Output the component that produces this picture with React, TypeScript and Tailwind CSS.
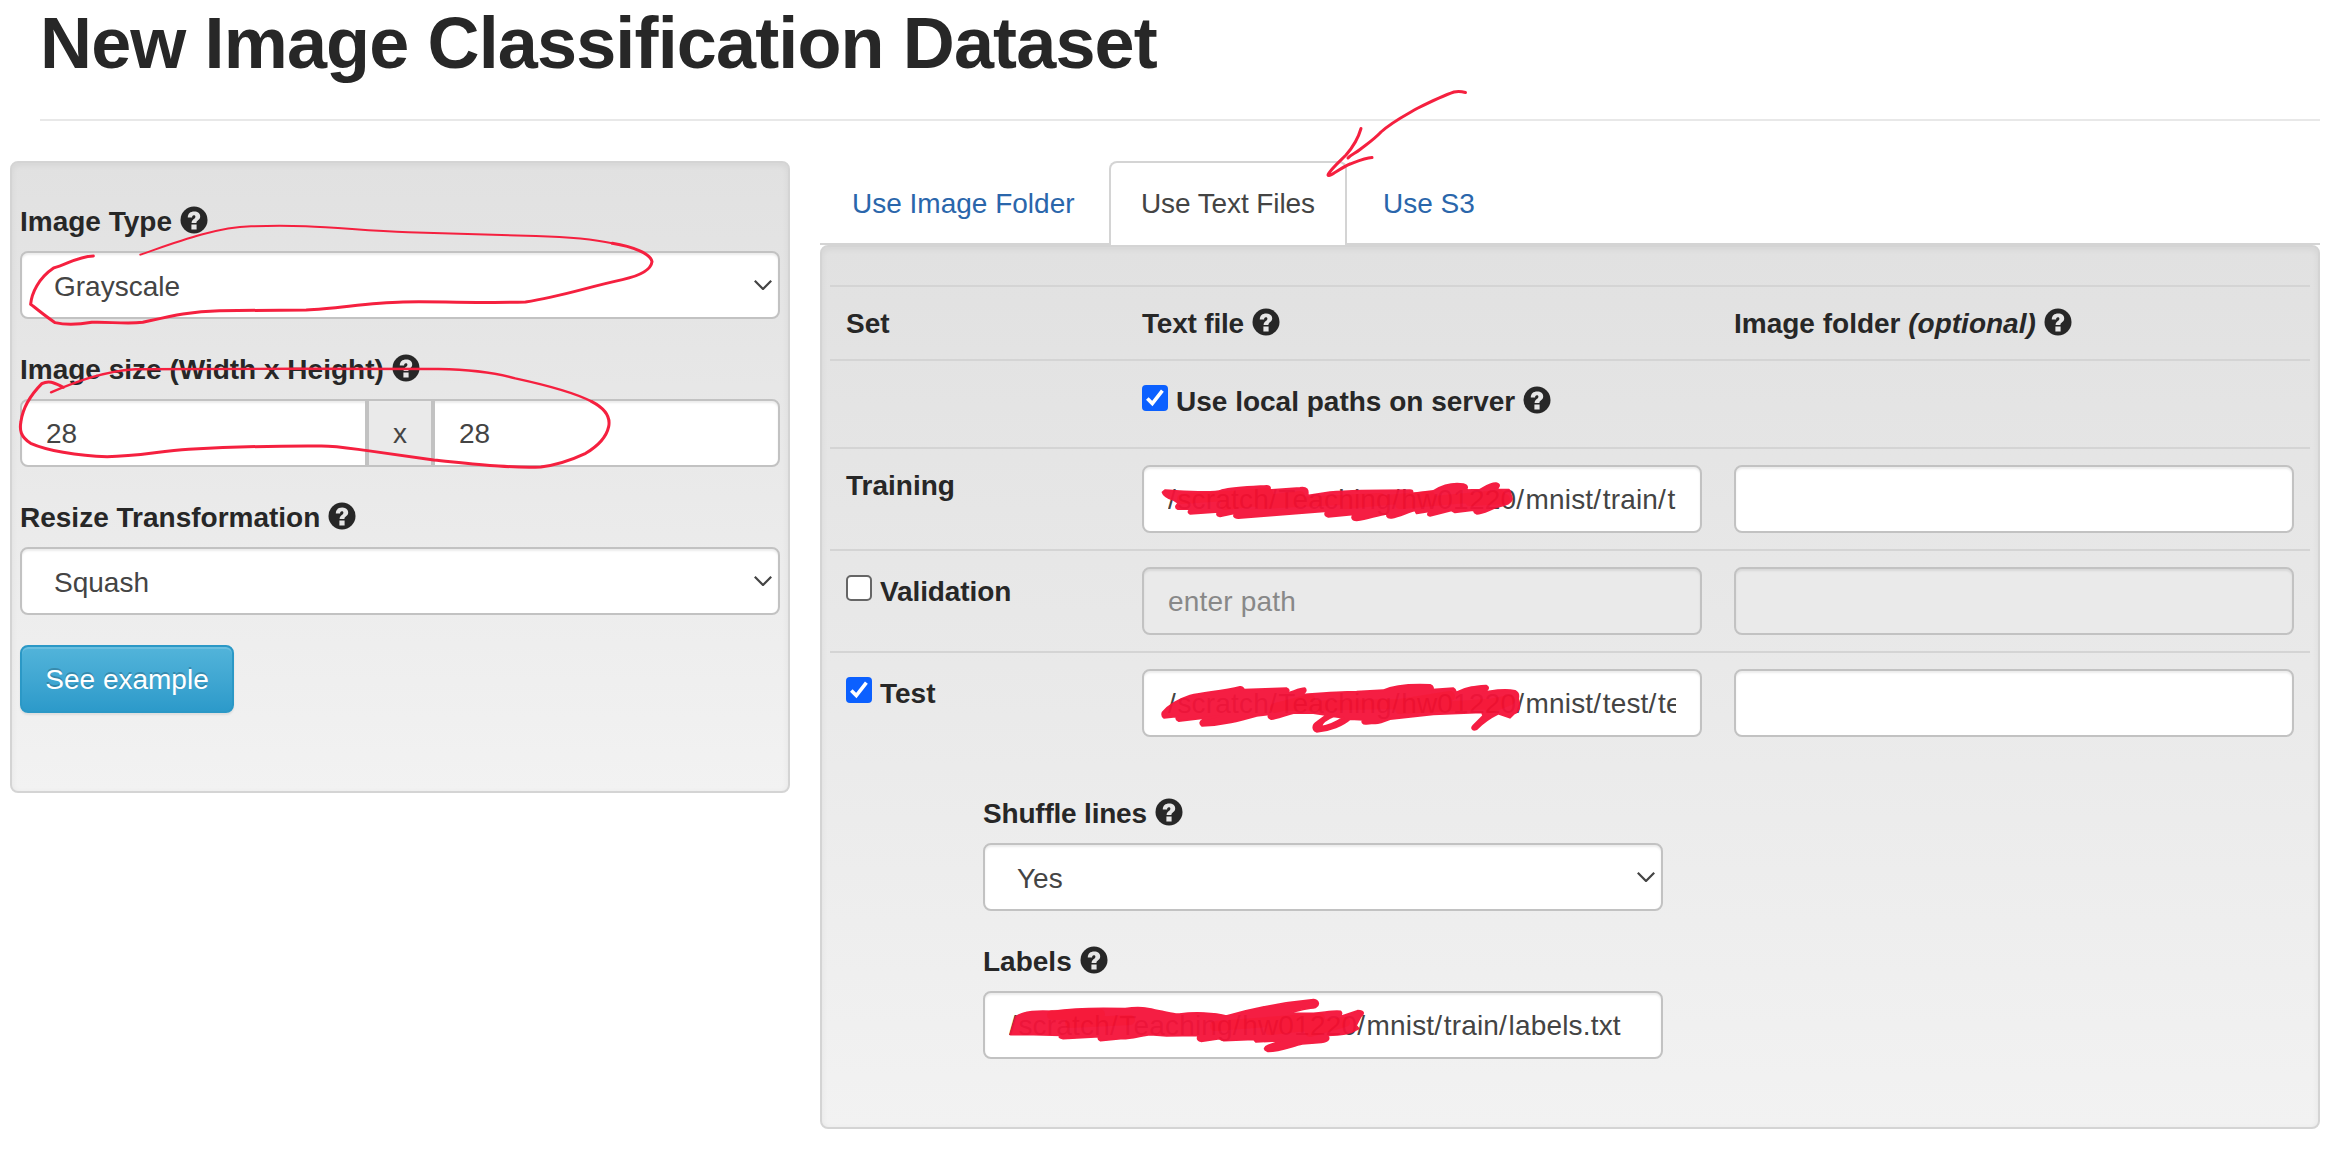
import React from "react";

const Q = () => (
  <svg viewBox="0 0 28 28" className="inline-block h-[28px] w-[28px] shrink-0 fill-[#272727]">
    <circle cx="14" cy="14" r="13.5" />
    <path d="M7.8 11.6 C7.8 7.6 10.4 5.6 14.2 5.6 C17.8 5.6 20.2 7.4 20.2 10.4 C20.2 14 16.400 14 16.400 17 H11.600 C11.600 13.200 15.400 13.200 15.400 10.800 C15.400 9.700 14.700 9.300 13.800 9.300 C12.600 9.300 12.100 10.200 12.100 11.600 Z M11.400 18.600 H16.600 V23.600 H11.400 Z" fill="#e6e6e6" />
  </svg>
);

const FIELD =
  "h-[68px] w-full rounded-[8px] border-2 border-[#c2c2c2] bg-white text-[28px] leading-[40px] text-[#444] shadow-[inset_0_2px_2px_rgba(0,0,0,0.075)] overflow-hidden whitespace-nowrap flex items-center";

function Label({ children, tight = false }: { children: React.ReactNode; tight?: boolean }) {
  return (
    <div className={"mb-[10px] flex h-[40px] items-center gap-[7px] pt-[2px] text-[28px] font-bold leading-[40px] " + (tight ? "tracking-[-0.2px]" : "")}>
      {children}
      <span className="relative -top-[2px] left-[1px] flex"><Q /></span>
    </div>
  );
}

function Select({ value }: { value: string }) {
  return (
    <div className={FIELD + " justify-between pl-[32px] pr-[6px]"}>
      <span className="pt-[3px]">{value}</span>
      <svg viewBox="0 0 18 10" className="h-[10px] w-[18px] fill-none stroke-[#444]" strokeWidth="2.2">
        <path d="M0.8 0.8 L9 9 L17.2 0.8" />
      </svg>
    </div>
  );
}

/* Paths get slightly wider spacing, with extra room after each slash */
function PathText({ value }: { value: string }) {
  return (
    <>
      {value.split(/(\/)/).map((part, i) =>
        part === "/" ? <span key={i} className="tracking-[1.6px]">/</span> : <span key={i} className="tracking-[0.18px]">{part}</span>
      )}
    </>
  );
}

function Field({ value = "", disabled = false }: { value?: string; disabled?: boolean }) {
  return (
    <div className={FIELD + " px-[24px] " + (disabled ? "bg-[#eaeaea]! text-[#888]!" : "")}>
      <span className="block w-full overflow-hidden pt-[2px]"><PathText value={value} /></span>
    </div>
  );
}

function Check({ on }: { on: boolean }) {
  return on ? (
    <svg viewBox="0 0 26 26" className="h-[26px] w-[26px] shrink-0">
      <rect width="26" height="26" rx="4" fill="#0b60ff" />
      <path d="M5.3 13.600 L10.300 18.600 L20.400 5.600" fill="none" stroke="#fff" strokeWidth="3.6" />
    </svg>
  ) : (
    <span className="h-[26px] w-[26px] shrink-0 rounded-[5px] border-2 border-[#666] bg-white" />
  );
}

const WELL =
  "rounded-[8px] border-2 border-[#d4d4d4] bg-linear-to-b from-[#e1e1e1] to-[#f2f2f2] shadow-[inset_0_2px_6px_rgba(0,0,0,0.06)]";
const ROW = "grid grid-cols-[296px_592px_592px] border-t-2 border-[#d4d4d4]";

/* Freehand marker strokes drawn over the form */
function Annotations() {
  return (
    <svg className="pointer-events-none absolute left-0 top-0 h-[1158px] w-[2346px] fill-none" viewBox="0 0 2346 1158" strokeLinecap="round" strokeLinejoin="round" stroke="#f5203f">
      <g transform="translate(0 150) scale(0.5102 0.3333)" strokeWidth="3">
        <path vectorEffect="non-scaling-stroke" strokeWidth="2" d="M275 314 C340 280 420 232 492 229 C620 222 680 240 800 247 L1050 258 C1120 261 1160 266 1200 280" />
        <path vectorEffect="non-scaling-stroke" d="M1200 280 C1240 290 1275 310 1278 335 C1276 360 1255 377 1220 389 C1150 412 1100 440 1030 456 C960 460 860 454 790 456 C720 458 660 477 600 480 L430 482 C370 484 330 500 280 517 C245 524 210 514 180 517 C150 525 130 526 108 518 C90 500 75 480 60 463 C62 430 75 385 105 354 C130 345 150 320 183 318" />
        <path vectorEffect="non-scaling-stroke" strokeWidth="2.4" d="M100 727 C150 695 200 665 265 658 C400 655 700 657 860 657 C930 659 980 672 1010 685 C1070 705 1130 730 1160 755" />
        <path vectorEffect="non-scaling-stroke" d="M1160 755 C1185 775 1197 800 1193 830 C1188 865 1170 890 1148 910 C1120 930 1090 945 1060 951 C1000 955 930 942 850 930 L720 902 C690 896 660 888 630 888 C540 887 430 893 370 898 C310 904 270 920 210 920 C150 919 90 900 60 880 C40 860 38 840 41 815 C45 770 60 735 82 701 C98 688 110 702 124 712" />
      </g>
      <g strokeWidth="3">
        <path d="M1348 158 C1351 154.500 1355 153.500 1360 149.500 C1367 144 1374 139.500 1381 132 C1392 122 1404 116 1417 108.500 C1430 102 1442 96 1454 92 C1458 91 1462 91.500 1465.500 92.500" />
        <path d="M1361 128.500 C1358 139 1353 147 1346 155 C1338 163 1329 171 1328 175 C1329 178 1340 168 1350 164 C1358 161 1365 158 1372 157.500" />
      </g>
      <g opacity="0.955">
        <g transform="translate(1150 475) scale(0.33333)" fill="#f5133a" stroke="#f5133a" strokeWidth="6">
          {/* training path */}
          <path d="M45 46 C120 50 190 56 215 46 C250 38 300 36 350 33 C362 34 362 42 355 46 L450 39 C470 36 476 44 472 62 L540 52 C610 46 700 46 780 46 C790 46 788 52 784 56 L850 48 C880 30 915 24 940 28 C956 32 952 42 945 46 L990 44 C1005 36 1022 24 1038 25 C1052 28 1048 38 1036 44 L1076 44 C1082 46 1080 56 1086 72 C1082 88 1060 90 1030 100 C1010 108 995 116 980 116 C970 112 972 108 976 104 L915 112 L905 106 L840 122 C830 120 834 114 842 108 L800 115 L795 106 C770 112 750 124 725 128 C710 130 708 120 716 116 C680 118 660 132 620 136 C604 136 604 124 612 118 L535 125 C522 122 524 112 532 108 L265 129 C250 128 250 122 256 114 L210 124 C198 122 200 114 206 110 L120 116 C112 112 116 104 128 102 L84 102 C74 98 78 88 88 86 L70 74 C50 70 40 58 38 52 Z" />
          {/* test path */}
          <path d="M38 712 C60 686 90 672 120 662 C170 652 220 648 270 636 C280 634 280 642 282 644 L410 640 C420 644 416 650 408 656 C430 650 450 640 464 640 C472 648 462 656 450 660 C500 656 560 650 620 650 L700 646 C730 632 790 628 840 630 C850 634 850 640 846 644 L910 640 C920 646 914 652 920 652 C950 636 980 634 1008 632 C1020 638 1012 646 1000 652 C1030 648 1060 640 1095 648 C1110 656 1104 664 1104 672 C1110 690 1112 708 1092 716 L1080 728 L1045 716 C1020 728 998 744 980 762 C966 768 964 758 970 752 L1000 722 L996 712 L850 718 L720 732 C700 740 680 746 672 744 L650 746 C638 748 634 740 640 734 L600 732 C580 750 540 768 500 770 C486 764 488 750 500 742 L530 720 L490 714 L430 714 C400 722 380 730 364 732 C354 728 354 724 358 718 L320 722 C270 736 220 750 156 752 C148 746 150 738 160 734 L205 724 L86 738 C76 732 78 728 84 724 L42 728 C36 724 36 718 38 712 Z M512 756 C540 752 565 738 580 728 L550 724 C530 732 515 744 512 756 Z" fillRule="evenodd" />
        </g>
        <g transform="translate(960 780) scale(0.45918 0.33333)" fill="#f5133a" stroke="#f5133a" strokeWidth="5">
          {/* labels path */}
          <path d="M110 764 L122 710 C140 692 170 692 205 694 C250 684 310 684 360 686 C400 678 415 688 440 694 C460 700 470 704 478 702 C510 696 555 698 580 708 C630 688 700 668 770 659 C782 662 782 676 774 682 C750 688 730 692 716 700 L770 700 C800 696 820 690 828 694 C834 702 828 708 824 712 L866 692 C880 692 880 702 872 710 L862 736 L868 746 C850 762 830 766 800 766 C806 778 800 788 780 788 L745 792 C720 800 690 816 670 814 C660 808 664 800 672 796 L700 782 L645 786 L640 778 L575 782 L565 776 L525 784 C514 780 518 772 520 766 L450 768 L415 764 C390 768 370 778 350 776 L306 782 C298 776 304 772 304 770 L225 776 C214 772 216 770 220 766 L160 764 Z" />
        </g>
        <g fill="none" stroke="#f50f2f" strokeWidth="10" opacity="0.75">
          <path d="M1182 499 L1268 493 L1225 505 L1300 496 L1260 504 L1380 498 L1345 504 L1430 496 L1400 504 L1500 495 L1470 501 L1505 499" />
          <path d="M1275 708 L1310 699 L1290 706 L1400 704 L1450 696 L1400 709 L1490 704 L1510 700 L1490 708" />
          <path d="M1052 1015 L1100 1014 L1070 1023 L1130 1020 M1215 1026 L1320 1018 L1270 1030 L1345 1022 L1310 1032" />
        </g>
      </g>
    </svg>
  );
}

export default function App() {
  return (
    <div className="relative h-[1158px] w-[2346px] overflow-hidden bg-white font-['Liberation_Sans',Arial,sans-serif] text-[28px] leading-[40px] text-[#272727]">
      <header className="ml-[40px] h-[121px] w-[2280px] border-b-2 border-[#e8e8e8]">
        <h1 className="whitespace-nowrap pt-[3px] text-[72px] font-bold leading-[80px] tracking-[-0.86px]">New Image Classification Dataset</h1>
      </header>
      <div className="mt-[40px] flex items-start">
        <section className={WELL + " ml-[10px] h-[632px] w-[780px] px-[8px] pt-[38px]"}>
          <Label>Image Type</Label>
          <Select value="Grayscale" />
          <div className="h-[30px]" />
          <Label>Image size (Width x Height)</Label>
          <div className={FIELD}>
            <span className="flex-1 pl-[24px] pt-[2px]">28</span>
            <span className="flex h-full w-[70px] items-center justify-center border-x-4 border-[#c2c2c2] bg-[#eaeaea] pt-[2px]">x</span>
            <span className="flex-1 pl-[24px] pt-[2px]">28</span>
          </div>
          <div className="h-[30px]" />
          <Label>Resize Transformation</Label>
          <Select value="Squash" />
          <button className="mt-[30px] h-[68px] w-[214px] rounded-[8px] border-2 border-[#2b98c6] bg-linear-to-b from-[#52b4da] to-[#2c9aca] pt-[2px] text-white shadow-[inset_0_2px_0_rgba(255,255,255,0.15),0_2px_2px_rgba(0,0,0,0.075)] [text-shadow:0_-2px_0_rgba(0,0,0,0.2)]">
            See example
          </button>
        </section>

        <section className="ml-[30px] w-[1500px]">
          <nav className="flex h-[84px] border-b-2 border-[#d4d4d4] text-[#2a66ab]">
            <a className="mr-[4px] w-[285px] whitespace-nowrap pl-[32px] pt-[23px]">Use Image Folder</a>
            <a className="mr-[4px] h-[84px] w-[238px] whitespace-nowrap rounded-t-[8px] border-2 border-b-0 border-[#d4d4d4] bg-white pl-[30px] pt-[21px] tracking-[-0.1px] text-[#444]">Use Text Files</a>
            <a className="whitespace-nowrap pl-[32px] pt-[23px]">Use S3</a>
          </nav>
          <div className={WELL + " h-[884px] px-[8px] pt-[38px]"}>
            <div className={ROW + " h-[74px] font-bold"}>
              <div className="px-[16px] pt-[17px]">Set</div>
              <div className="px-[16px] pt-[16px]"><Label tight>Text file</Label></div>
              <div className="px-[16px] pt-[16px]"><Label><span>Image folder <i>(optional)</i></span></Label></div>
            </div>
            <div className={ROW + " h-[88px]"}>
              <div />
              <div className="flex items-start gap-[8px] px-[16px] pt-[20px]">
                <span className="mt-[4px] flex"><Check on /></span>
                <Label>Use local paths on server</Label>
              </div>
              <div />
            </div>
            <div className={ROW + " h-[102px]"}>
              <div className="px-[16px] pt-[17px] font-bold">Training</div>
              <div className="px-[16px] pt-[16px]"><Field value="/scratch/Teaching/hw01220/mnist/train/t" /></div>
              <div className="px-[16px] pt-[16px]"><Field /></div>
            </div>
            <div className={ROW + " h-[102px]"}>
              <div className="flex items-start gap-[8px] px-[16px] pt-[21px] font-bold tracking-[-0.1px]"><span className="mt-[3px] flex"><Check on={false} /></span>Validation</div>
              <div className="px-[16px] pt-[16px]"><Field disabled value="enter path" /></div>
              <div className="px-[16px] pt-[16px]"><Field disabled /></div>
            </div>
            <div className={ROW + " h-[102px]"}>
              <div className="flex items-start gap-[8px] px-[16px] pt-[21px] font-bold"><span className="mt-[3px] flex"><Check on /></span>Test</div>
              <div className="px-[16px] pt-[16px]"><Field value="/scratch/Teaching/hw01220/mnist/test/te" /></div>
              <div className="px-[16px] pt-[16px]"><Field /></div>
            </div>
            <div className="ml-[153px] mt-[40px] w-[680px]">
              <Label tight>Shuffle lines</Label>
              <Select value="Yes" />
              <div className="h-[30px]" />
              <Label>Labels</Label>
              <Field value="/scratch/Teaching/hw01220/mnist/train/labels.txt" />
            </div>
          </div>
        </section>
      </div>
      <Annotations />
    </div>
  );
}
